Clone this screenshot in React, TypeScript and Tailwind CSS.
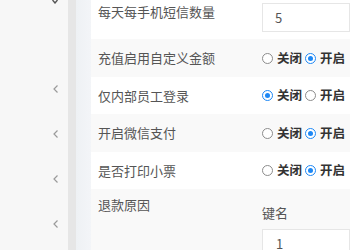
const font = { fontFamily: '"Noto Sans CJK SC", "Liberation Sans", sans-serif' };

function Radio({ checked }: { checked: boolean }) {
  return (
    <span
      className={`inline-flex h-[11px] w-[11px] items-center justify-center rounded-full border ${
        checked ? 'border-[#1e88f5] bg-white' : 'border-[#8c8c8c] bg-white'
      }`}
    >
      {checked && <span className="h-[5px] w-[5px] rounded-full bg-[#1e88f5]" />}
    </span>
  );
}

function Switch({ on }: { on: boolean }) {
  return (
    <div className="flex items-center text-[12.5px] font-bold text-[#333]">
      <Radio checked={!on} />
      <span className="ml-[4px]">关闭</span>
      <span className="ml-[3px] flex">
        <Radio checked={on} />
      </span>
      <span className="ml-[4px]">开启</span>
    </div>
  );
}

function Chevron() {
  return (
    <svg width="8" height="10" viewBox="0 0 8 10" className="text-[#9a9a9a]">
      <path d="M5.5 1.5 L2 5 L5.5 8.5" fill="none" stroke="currentColor" strokeWidth="1.2" />
    </svg>
  );
}

const rows = [
  { label: '充值启用自定义金额', on: true, bg: 'bg-[#f9f9f9]', h: 'h-[38px]' },
  { label: '仅内部员工登录', on: false, bg: 'bg-white', h: 'h-[37px]' },
  { label: '开启微信支付', on: true, bg: 'bg-[#f9f9f9]', h: 'h-[38px]' },
  { label: '是否打印小票', on: true, bg: 'bg-white', h: 'h-[37px]' },
];

export default function App() {
  return (
    <div className="flex h-[250px] w-[350px] overflow-hidden bg-white" style={font}>
      {/* Sidebar */}
      <div className="relative flex w-[68px] shrink-0 flex-col items-end bg-[#f7f7f7] pr-[8px]">
        <svg width="6" height="4" viewBox="0 0 6 4" className="absolute left-[52px] top-0 text-[#555]">
          <path d="M0.5 0 L3 3 L5.5 0" fill="none" stroke="currentColor" strokeWidth="1.4" />
        </svg>
        <div className="mt-[84px] flex flex-col gap-[35px]">
          <Chevron />
          <Chevron />
          <Chevron />
          <Chevron />
        </div>
      </div>
      <div className="w-[8px] shrink-0 bg-[#e6e6e6]" />
      <div className="w-[15px] shrink-0 bg-gradient-to-r from-[#eef1f4] to-[#f3f5f8]" />

      {/* Content */}
      <div className="flex min-w-0 flex-1 flex-col text-[13px] text-[#555]">
        <div className="flex h-[39px] shrink-0 items-start bg-white">
          <div className="w-[171px] shrink-0 pl-[7px] pt-[2px] leading-[20px]">每天每手机短信数量</div>
          <div className="mt-[3px] flex h-[29px] flex-1 items-center border border-[#e6e6e6] bg-white pl-[12px] text-[#555]">
            5
          </div>
        </div>
        {rows.map((r) => (
          <div key={r.label} className={`flex shrink-0 items-center ${r.bg} ${r.h}`}>
            <div className="w-[171px] shrink-0 pl-[7px] leading-[20px]">{r.label}</div>
            <Switch on={r.on} />
          </div>
        ))}
        <div className="flex flex-1 items-start bg-[#f9f9f9]">
          <div className="w-[171px] shrink-0 pl-[7px] pt-[6px] leading-[20px]">退款原因</div>
          <div className="flex flex-1 flex-col">
            <div className="mt-[14px] leading-[20px]">键名</div>
            <div className="mt-[6px] flex h-[30px] items-center border border-[#e6e6e6] bg-white pl-[13px]">1</div>
          </div>
        </div>
      </div>
    </div>
  );
}
